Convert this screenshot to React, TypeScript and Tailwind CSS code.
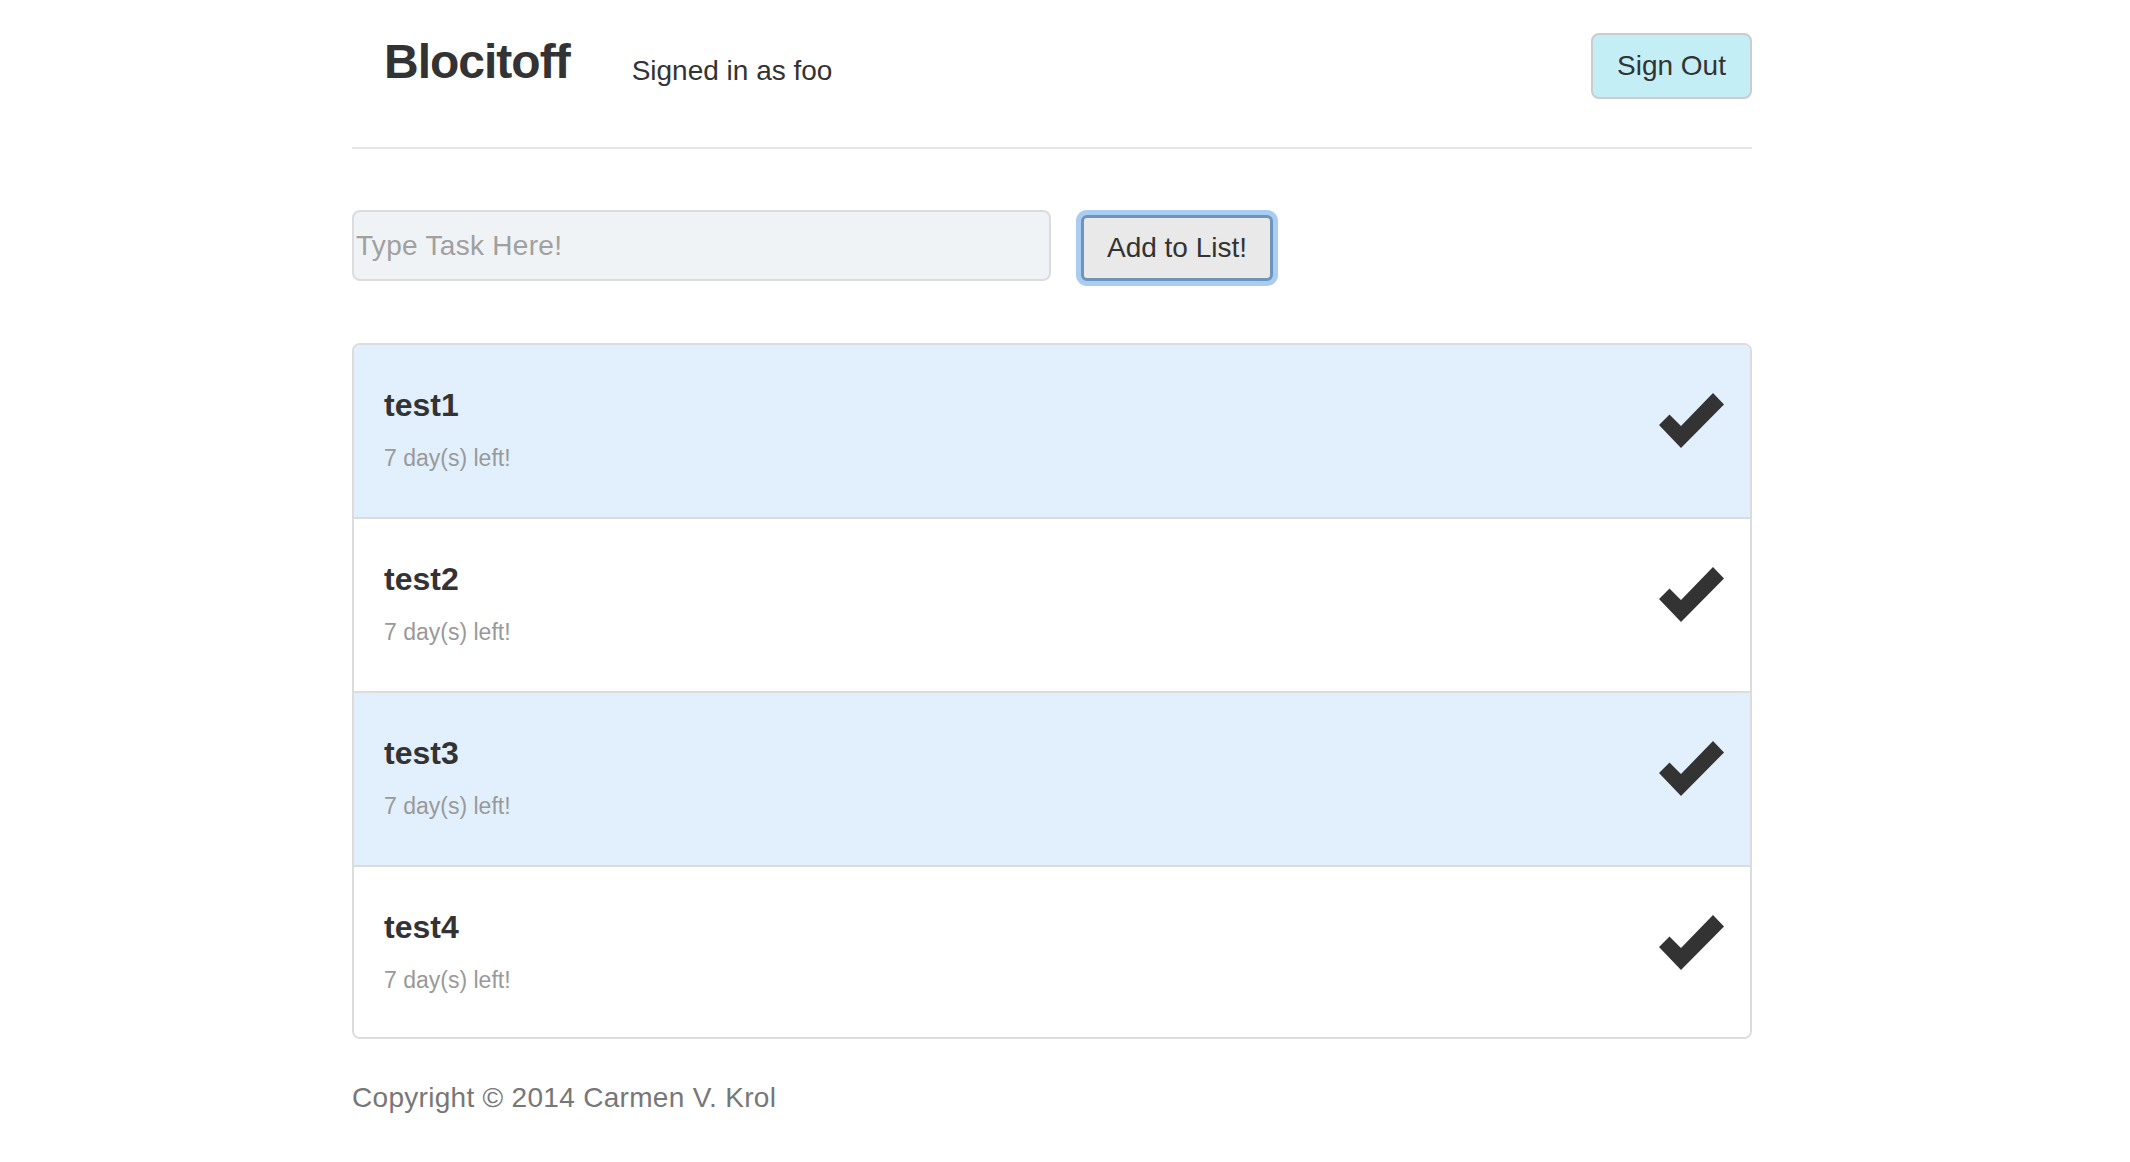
import React from "react";

interface Task {
  id: number;
  name: string;
  daysLeft: number;
}

const tasks: Task[] = [
  { id: 1, name: "test1", daysLeft: 7 },
  { id: 2, name: "test2", daysLeft: 7 },
  { id: 3, name: "test3", daysLeft: 7 },
  { id: 4, name: "test4", daysLeft: 7 },
];

const CheckIcon: React.FC = () => (
  <svg width="65" height="55" viewBox="0 0 65 55" className="block">
    <polygon points="0,32 10.5,21.5 22,33 54,0 65,11.5 22,55" fill="#333333" />
  </svg>
);

const App: React.FC = () => {
  return (
    <div
      className="min-h-screen w-full bg-white text-[#333333]"
      style={{ fontFamily: '"Liberation Sans", Arial, sans-serif' }}
    >
      <div className="ml-[352px] w-[1400px]">
        {/* header */}
        <div className="flex h-[147px] items-start">
          <h1 className="ml-[32px] mt-[38px] text-[48px] font-bold leading-[48px] tracking-[-1px]">
            Blocitoff
          </h1>
          <p className="ml-[62px] mt-[57px] text-[28px] leading-[28px]">Signed in as foo</p>
          <button className="ml-auto mt-[33px] h-[66px] w-[161px] rounded-[8px] border-2 border-[#cccccc] bg-[#c4eef5] text-[28px] leading-[28px] text-[#333333]">
            Sign Out
          </button>
        </div>
        <div className="h-[2px] w-full bg-[#e6e6e6]" />

        {/* new task form */}
        <div className="mt-[61px] flex items-start">
          <input
            type="text"
            placeholder="Type Task Here!"
            className="h-[71px] w-[699px] rounded-[8px] border-2 border-[#dcdcdc] bg-[#eff3f6] pl-[2px] text-[28px] tracking-[0.3px] text-[#333333] outline-none placeholder:text-[#a0a0a0]"
          />
          <button className="ml-[30px] mt-[5px] h-[66px] w-[192px] rounded-[6px] border-[3px] border-[#6f94bc] bg-[#e9e9e9] text-[28px] leading-[28px] text-[#333333] shadow-[0_0_0_5px_#a9cdf0]">
            Add to List!
          </button>
        </div>

        {/* task list */}
        <div className="mt-[62px] overflow-hidden rounded-[8px] border-2 border-[#dcdcdc]">
          {tasks.map((task, i) => (
            <div
              key={task.id}
              className={`flex items-start pl-[30px] pr-[26px] pt-[44px] ${
                i === 0 ? "h-[172px]" : i === tasks.length - 1 ? "h-[172px] border-t-2 border-[#dcdcdc]" : "h-[174px] border-t-2 border-[#dcdcdc]"
              } ${i % 2 === 0 ? "bg-[#e2f0fd]" : "bg-white"}`}
            >
              <div className="flex-1">
                <h3 className="text-[32px] font-bold leading-[32px]">{task.name}</h3>
                <p className="mt-[26px] text-[23px] leading-[23px] text-[#999999]">
                  {task.daysLeft} day(s) left!
                </p>
              </div>
              <div className="mt-[4px]">
                <CheckIcon />
              </div>
            </div>
          ))}
        </div>

        {/* footer */}
        <p className="mt-[45px] text-[28px] leading-[28px] tracking-[0.3px] text-[#777777]">
          Copyright © 2014 Carmen V. Krol
        </p>
      </div>
    </div>
  );
};

export default App;
